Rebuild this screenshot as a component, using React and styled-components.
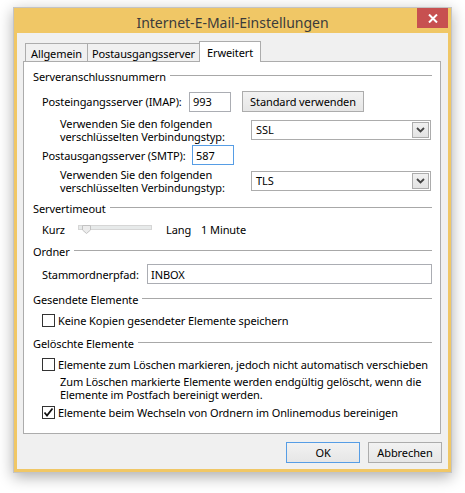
import React from "react";
import styled, { createGlobalStyle } from "styled-components";

const FONT = `"Noto Sans", "Open Sans", sans-serif`;

const Global = createGlobalStyle`
  html, body { margin: 0; padding: 0; background: #ffffff; }
  body { font-family: ${FONT}; font-size: 11px; letter-spacing: -0.1px; color: #000; }
  * { box-sizing: border-box; }
`;

const Page = styled.div`
  padding: 7px 0 0 13px;
  width: 465px;
  height: 493px;
`;

const Window = styled.div`
  width: 439px;
  height: 466px;
  border: 1px solid #c4c4c4;
  background: #f0c766;
  padding: 0 3px 3px 3px;
  display: flex;
  flex-direction: column;
  box-shadow: 0 4px 14px rgba(0, 0, 0, 0.32);
`;

const TitleBar = styled.div`
  height: 25px;
  display: grid;
  grid-template-columns: 31px 1fr 31px;
  flex: none;
`;

const Title = styled.div`
  grid-column: 2;
  text-align: center;
  font-size: 14px;
  letter-spacing: 0;
  line-height: 25px;
  padding-top: 2px;
  color: #3b3b3b;
  white-space: nowrap;
`;

const CloseButton = styled.div`
  grid-column: 3;
  width: 31px;
  height: 20px;
  background: #c75050;
  display: flex;
  align-items: center;
  justify-content: center;
`;

const Content = styled.div`
  flex: 1;
  background: #f0f0f0;
  padding: 8px 7px 0 6px;
  display: flex;
  flex-direction: column;
`;

const TabRow = styled.div`
  display: flex;
  align-items: flex-end;
  height: 20px;
  padding-left: 2px;
  position: relative;
  z-index: 1;
`;

const Tab = styled.div`
  width: ${(p) => p.$w}px;
  height: ${(p) => (p.$active ? 21 : 18)}px;
  margin-bottom: ${(p) => (p.$active ? -1 : 0)}px;
  margin-left: ${(p) => (p.$first ? 0 : -1)}px;
  border: 1px solid #acacac;
  border-bottom: none;
  background: ${(p) => (p.$active ? "#ffffff" : "#f0f0f0")};
  display: flex;
  align-items: center;
  justify-content: center;
  padding-top: ${(p) => (p.$active ? 0 : 1)}px;
  white-space: nowrap;
`;

const Panel = styled.div`
  height: 373px;
  border: 1px solid #acacac;
  background: #ffffff;
  padding: 6px 8px 0 9px;
  display: flex;
  flex-direction: column;
`;

const GroupHeader = styled.div`
  height: 16px;
  margin-top: ${(p) => p.$mt || 0}px;
  display: flex;
  align-items: center;
  white-space: nowrap;
  &::after {
    content: "";
    flex: 1;
    height: 1px;
    background: #a8a8a8;
    margin-left: 4px;
    margin-top: -1px;
  }
`;

const Row = styled.div`
  display: flex;
  align-items: center;
  height: ${(p) => p.$h}px;
  margin-top: ${(p) => p.$mt}px;
  padding-left: ${(p) => p.$indent}px;
  flex: none;
`;

const Label = styled.div`
  width: ${(p) => p.$w}px;
  flex: none;
  line-height: 13px;
  white-space: nowrap;
`;

const TextBox = styled.div`
  width: ${(p) => p.$w}px;
  height: 20px;
  border: 1px solid ${(p) => (p.$focus ? "#569de5" : "#abadb3")};
  background: #fff;
  padding-left: 3px;
  display: flex;
  align-items: center;
  flex: none;
`;

const PushButton = styled.div`
  width: ${(p) => p.$w}px;
  height: 21px;
  border: 1px solid ${(p) => (p.$default ? "#569de5" : "#acacac")};
  background: linear-gradient(#f2f2f2, #e6e6e6);
  display: flex;
  align-items: center;
  justify-content: center;
  margin-left: ${(p) => p.$ml || 0}px;
  flex: none;
  white-space: nowrap;
`;

const Select = styled.div`
  width: 180px;
  height: 20px;
  border: 1px solid #acacac;
  background: #fff;
  display: flex;
  align-items: center;
  justify-content: space-between;
  padding: 1px 1px 1px 4px;
  flex: none;
`;

const DropButton = styled.div`
  width: 17px;
  height: 16px;
  border: 1px solid #acacac;
  background: linear-gradient(#f0f0f0, #e3e3e3);
  display: flex;
  align-items: center;
  justify-content: center;
  align-self: flex-start;
`;

const SliderTrack = styled.div`
  width: 74px;
  height: 5px;
  border: 1px solid #d6d6d6;
  background: #e7eaea;
  position: relative;
  margin-right: 14px;
  margin-top: -3px;
  flex: none;
`;

const SliderThumb = styled.svg`
  position: absolute;
  left: 3px;
  top: -1px;
`;

const Plain = styled.span`
  margin-right: ${(p) => p.$mr || 0}px;
  white-space: nowrap;
`;

const CheckBox = styled.div`
  width: 13px;
  height: 13px;
  border: 1px solid #333;
  background: #fff;
  margin-right: 3px;
  display: flex;
  align-items: center;
  justify-content: center;
  flex: none;
`;

const Note = styled.div`
  margin-top: ${(p) => p.$mt}px;
  padding-left: 27px;
  line-height: 13px;
  height: 26px;
  white-space: nowrap;
  flex: none;
`;

const Footer = styled.div`
  display: flex;
  justify-content: flex-end;
  gap: 8px;
  padding-top: 8px;
  margin-right: -1px;
`;

const Chevron = () => (
  <svg width="9" height="6" viewBox="0 0 9 6">
    <path d="M1 1 L4.5 4.5 L8 1" fill="none" stroke="#444" strokeWidth="1.8" />
  </svg>
);

const Check = () => (
  <svg width="11" height="11" viewBox="0 0 11 11">
    <path d="M1.5 5.5 L4 8.5 L9.5 1.5" fill="none" stroke="#111" strokeWidth="1.8" />
  </svg>
);

export default function App() {
  return (
    <>
      <Global />
      <Page>
        <Window>
          <TitleBar>
            <Title>Internet-E-Mail-Einstellungen</Title>
            <CloseButton>
              <svg width="10" height="9" viewBox="0 0 10 9">
                <path d="M1 0.5 L9 8.5 M9 0.5 L1 8.5" stroke="#fff" strokeWidth="2" />
              </svg>
            </CloseButton>
          </TitleBar>
          <Content>
            <TabRow>
              <Tab $w={63} $first>Allgemein</Tab>
              <Tab $w={113}>Postausgangsserver</Tab>
              <Tab $w={62} $active>Erweitert</Tab>
            </TabRow>
            <Panel>
              <GroupHeader>Serveranschlussnummern</GroupHeader>
              <Row $h={21} $mt={7} $indent={9}>
                <Label $w={147}>Posteingangsserver (IMAP):</Label>
                <TextBox $w={42}>993</TextBox>
                <PushButton $w={122} $ml={11}>Standard verwenden</PushButton>
              </Row>
              <Row $h={27} $mt={4} $indent={27}>
                <Label $w={191}>
                  Verwenden Sie den folgenden
                  <br />
                  verschlüsselten Verbindungstyp:
                </Label>
                <Select>
                  SSL
                  <DropButton>
                    <Chevron />
                  </DropButton>
                </Select>
              </Row>
              <Row $h={20} $mt={2} $indent={9}>
                <Label $w={150}>Postausgangsserver (SMTP):</Label>
                <TextBox $w={42} $focus>587</TextBox>
              </Row>
              <Row $h={27} $mt={2} $indent={27}>
                <Label $w={191}>
                  Verwenden Sie den folgenden
                  <br />
                  verschlüsselten Verbindungstyp:
                </Label>
                <Select>
                  TLS
                  <DropButton>
                    <Chevron />
                  </DropButton>
                </Select>
              </Row>
              <GroupHeader $mt={6}>Servertimeout</GroupHeader>
              <Row $h={16} $mt={5} $indent={9}>
                <Label $w={36}>Kurz</Label>
                <SliderTrack>
                  <SliderThumb width="9" height="9" viewBox="0 0 9 9">
                    <path d="M0.5 0.5 H8.5 V5 L4.5 8.5 L0.5 5 Z" fill="#ececec" stroke="#c2c2c2" />
                  </SliderThumb>
                </SliderTrack>
                <Plain $mr={10}>Lang</Plain>
                <Plain>1 Minute</Plain>
              </Row>
              <GroupHeader $mt={6}>Ordner</GroupHeader>
              <Row $h={20} $mt={5} $indent={9}>
                <Label $w={105}>Stammordnerpfad:</Label>
                <TextBox $w={285}>INBOX</TextBox>
              </Row>
              <GroupHeader $mt={7}>Gesendete Elemente</GroupHeader>
              <Row $h={16} $mt={5} $indent={9}>
                <CheckBox />
                <Plain>Keine Kopien gesendeter Elemente speichern</Plain>
              </Row>
              <GroupHeader $mt={7}>Gelöschte Elemente</GroupHeader>
              <Row $h={16} $mt={5} $indent={9}>
                <CheckBox />
                <Plain>Elemente zum Löschen markieren, jedoch nicht automatisch verschieben</Plain>
              </Row>
              <Note $mt={3}>
                Zum Löschen markierte Elemente werden endgültig gelöscht, wenn die
                <br />
                Elemente im Postfach bereinigt werden.
              </Note>
              <Row $h={16} $mt={3} $indent={9}>
                <CheckBox>
                  <Check />
                </CheckBox>
                <Plain>Elemente beim Wechseln von Ordnern im Onlinemodus bereinigen</Plain>
              </Row>
            </Panel>
            <Footer>
              <PushButton $w={74} $default>OK</PushButton>
              <PushButton $w={74}>Abbrechen</PushButton>
            </Footer>
          </Content>
        </Window>
      </Page>
    </>
  );
}
